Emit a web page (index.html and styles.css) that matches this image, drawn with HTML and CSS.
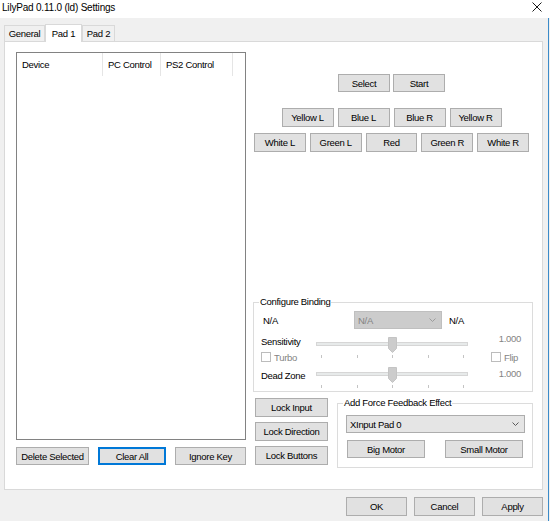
FILE: index.html
```html
<!DOCTYPE html>
<html>
<head>
<meta charset="utf-8">
<title>LilyPad Settings</title>
<link rel="stylesheet" href="styles.css">
</head>
<body>
<div class="window">
  <div class="titlebar">
    <span class="title">LilyPad 0.11.0 (ld) Settings</span>
    <svg class="close" width="10" height="10" viewBox="0 0 10 10"><path d="M0.5 0.5 L9.5 9.5 M9.5 0.5 L0.5 9.5" stroke="#1a1a1a" stroke-width="1" fill="none"/></svg>
  </div>
  <div class="client">
    <div class="tabs">
      <div class="tab tab-general">General</div>
      <div class="tab tab-pad1 active">Pad 1</div>
      <div class="tab tab-pad2">Pad 2</div>
    </div>
    <div class="page">
      <div class="left">
        <div class="list">
          <div class="list-head">
            <div class="col c1">Device</div>
            <div class="col c2">PC Control</div>
            <div class="col c3">PS2 Control</div>
          </div>
        </div>
        <div class="list-buttons">
          <button class="btn w-del">Delete Selected</button>
          <button class="btn focus w-clear">Clear All</button>
          <button class="btn w-ign">Ignore Key</button>
        </div>
      </div>
      <div class="right">
        <div class="btn-row row1">
          <button class="btn pad">Select</button>
          <button class="btn pad">Start</button>
        </div>
        <div class="btn-row row2">
          <button class="btn pad">Yellow L</button>
          <button class="btn pad">Blue L</button>
          <button class="btn pad">Blue R</button>
          <button class="btn pad">Yellow R</button>
        </div>
        <div class="btn-row row3">
          <button class="btn pad">White L</button>
          <button class="btn pad">Green L</button>
          <button class="btn pad">Red</button>
          <button class="btn pad">Green R</button>
          <button class="btn pad">White R</button>
        </div>

        <fieldset class="group config">
          <legend>Configure Binding</legend>
          <div class="binding-row">
            <div class="na-left">N/A</div>
            <div class="combo disabled binding-combo">
              <span>N/A</span>
              <svg width="7" height="4" viewBox="0 0 7 4"><path d="M0.5 0.5 L3.5 3.5 L6.5 0.5" stroke="#9c9c9c" fill="none"/></svg>
            </div>
            <div class="na-right">N/A</div>
          </div>
          <div class="slider-row sens">
            <div class="s-left">
              <div class="s-label">Sensitivity</div>
              <div class="checkline"><span class="check"></span><span class="dim">Turbo</span></div>
            </div>
            <div class="slider">
              <div class="track"></div>
              <div class="ticks"><span></span><span></span><span></span><span></span><span></span></div>
              <svg class="thumb" width="9" height="16" viewBox="0 0 9 16"><path d="M0.5 0.5 H8.5 V11.5 L4.5 15.5 L0.5 11.5 Z" fill="#cccccc" stroke="#c4c4c4"/></svg>
            </div>
            <div class="s-right">
              <div class="s-value dim">1.000</div>
              <div class="checkline flip"><span class="check"></span><span class="dim">Flip</span></div>
            </div>
          </div>
          <div class="slider-row dead">
            <div class="s-left">
              <div class="s-label">Dead Zone</div>
            </div>
            <div class="slider">
              <div class="track"></div>
              <div class="ticks"><span></span><span></span><span></span><span></span><span></span></div>
              <svg class="thumb" width="9" height="16" viewBox="0 0 9 16"><path d="M0.5 0.5 H8.5 V11.5 L4.5 15.5 L0.5 11.5 Z" fill="#cccccc" stroke="#c4c4c4"/></svg>
            </div>
            <div class="s-right">
              <div class="s-value dim">1.000</div>
            </div>
          </div>
        </fieldset>

        <div class="bottom-right">
          <div class="lock-col">
            <button class="btn lock">Lock Input</button>
            <button class="btn lock">Lock Direction</button>
            <button class="btn lock">Lock Buttons</button>
          </div>
          <fieldset class="group ff">
            <legend>Add Force Feedback Effect</legend>
            <div class="combo ff-combo">
              <span>XInput Pad 0</span>
              <svg width="7" height="4" viewBox="0 0 7 4"><path d="M0.5 0.5 L3.5 3.5 L6.5 0.5" stroke="#5a5a5a" fill="none"/></svg>
            </div>
            <div class="motor-row">
              <button class="btn motor">Big Motor</button>
              <button class="btn motor">Small Motor</button>
            </div>
          </fieldset>
        </div>
      </div>
    </div>
    <div class="dialog-buttons">
      <button class="btn dlg">OK</button>
      <button class="btn dlg">Cancel</button>
      <button class="btn dlg">Apply</button>
    </div>
  </div>
</div>
</body>
</html>
```
FILE: styles.css
```css
* { box-sizing: border-box; }
html, body { margin: 0; padding: 0; }
body {
  width: 550px;
  height: 521px;
  overflow: hidden;
  background: #f0f0f0;
  font-family: "Liberation Sans", Arial, sans-serif;
  font-size: 9.5px;
  letter-spacing: -0.3px;
  color: #000;
}
.window {
  width: 550px;
  height: 521px;
  display: flex;
  flex-direction: column;
}
.titlebar {
  height: 18px;
  background: #fff;
  display: flex;
  align-items: flex-start;
  justify-content: space-between;
  padding: 2px 8px 0 2px;
}
.title {
  font-size: 10px;
  letter-spacing: -0.2px;
  line-height: 11px;
}
.close { margin-top: 0; }

.client {
  flex: 1;
  width: 549px;
  border-right: 1px solid #3b8bc9;
  padding: 6px 5px 0 4px;
}

/* tabs */
.tabs {
  display: flex;
  align-items: flex-end;
  height: 17px;
}
.tab {
  height: 16px;
  border: 1px solid #d9d9d9;
  border-bottom: none;
  background: #f0f0f0;
  display: flex;
  align-items: center;
  justify-content: center;
}
.tab-general { width: 41px; }
.tab-pad1 { width: 37px; }
.tab-pad2 { width: 33px; }
.tab.active {
  height: 18px;
  margin-bottom: -1px;
  background: #fff;
  position: relative;
  z-index: 1;
  padding-bottom: 1px;
}

/* page */
.page {
  width: 539px;
  height: 449px;
  border: 1px solid #d9d9d9;
  background: #fff;
  display: flex;
  gap: 8px;
  padding: 10px 0 0 11px;
}
.left {
  width: 230px;
  display: flex;
  flex-direction: column;
}
.list {
  height: 388px;
  border: 1px solid #828282;
  background: #fff;
}
.list-head {
  display: flex;
  height: 23px;
}
.col {
  padding-left: 5px;
  border-right: 1px solid #e5e5e5;
  display: flex;
  align-items: center;
}
.c1 { width: 86px; }
.c2 { width: 58px; }
.c3 { width: 72px; }

.list-buttons {
  display: flex;
  justify-content: space-between;
  margin-top: 7px;
}

/* buttons */
.btn {
  font: inherit;
  letter-spacing: inherit;
  color: #000;
  background: #e1e1e1;
  border: 1px solid #adadad;
  border-radius: 0;
  padding: 0;
  margin: 0;
  display: flex;
  align-items: center;
  justify-content: center;
  white-space: nowrap;
}
.btn.focus {
  border-color: #0078d7;
  box-shadow: inset 0 0 0 1px #0078d7;
}
.w-del { width: 73px; height: 18px; }
.w-clear { width: 68px; height: 18px; }
.w-ign { width: 71px; height: 18px; }

.right {
  width: 288px;
  display: flex;
  flex-direction: column;
}
.btn-row {
  width: 275px;
  display: flex;
  justify-content: center;
  gap: 4px;
}
.btn.pad { width: 52px; height: 19px; }
.row1 { margin-top: 22px; gap: 3px; }
.row1 .btn.pad { height: 18px; }
.row2 { margin-top: 16px; }
.row3 { margin-top: 6px; }

/* group boxes */
.group {
  border: 1px solid #dcdcdc;
  padding: 0;
  margin: 0;
  min-width: 0;
}
.group legend {
  margin-left: 5px;
  padding: 0 1px;
  line-height: 12px;
}
.config {
  margin: 144px 0 0 -1px;
  width: 280px;
  height: 96px;
}
.binding-row {
  display: flex;
  align-items: center;
  height: 18px;
  margin-top: 3px;
}
.na-left { width: 100px; padding-left: 9px; }
.na-right { margin-left: 7px; }

.combo {
  display: flex;
  align-items: center;
  justify-content: space-between;
  border: 1px solid #adadad;
  background: #e5e5e5;
  padding: 0 5px 0 3px;
}
.combo.disabled {
  background: #cccccc;
  border-color: #bfbfbf;
  color: #838383;
}
.binding-combo { width: 88px; height: 18px; }

.slider-row {
  display: flex;
  padding-left: 7px;
}
.slider-row.sens { height: 25px; margin-top: 8px; }
.slider-row.dead { height: 23px; margin-top: 5px; }
.s-left { width: 55px; }
.s-label { line-height: 10px; }
.dead .s-label { margin-top: 4px; }
.checkline {
  display: flex;
  align-items: center;
  gap: 3px;
  height: 10px;
  margin-top: 5px;
}
.check {
  width: 10px;
  height: 10px;
  border: 1px solid #bcbcbc;
  background: #fff;
}
.dim { color: #838383; }
.slider {
  width: 152px;
  position: relative;
  padding-top: 5px;
}
.track {
  height: 4px;
  background: #e7eaea;
  border: 1px solid #d6d6d6;
}
.ticks {
  display: flex;
  justify-content: space-between;
  margin-top: 9px;
  padding: 0 4px 0 5px;
}
.ticks span {
  width: 1px;
  height: 3px;
  background: #c4c4c4;
}
.thumb {
  position: absolute;
  left: 72px;
  top: 0;
}
.s-right {
  width: 53px;
  text-align: right;
}
.s-value { line-height: 10px; margin-top: -3px; }
.dead .s-value { margin-top: 2px; }
.checkline.flip {
  justify-content: flex-end;
  margin-top: 8px;
  padding-right: 3px;
}

.bottom-right {
  display: flex;
  align-items: flex-start;
  margin-top: 6px;
}
.lock-col {
  margin-left: 1px;
  width: 73px;
  display: flex;
  flex-direction: column;
  gap: 5px;
}
.btn.lock { width: 73px; height: 19px; }
.ff {
  margin: -1px 0 0 9px;
  width: 196px;
  height: 71px;
}
.ff-combo {
  width: 179px;
  height: 18px;
  margin: 6px 0 0 8px;
}
.motor-row {
  display: flex;
  gap: 20px;
  margin: 7px 0 0 9px;
}
.btn.motor { width: 78px; height: 18px; }

.dialog-buttons {
  display: flex;
  justify-content: flex-end;
  gap: 7px;
  margin-top: 7px;
}
.btn.dlg { width: 61px; height: 19px; }
```
